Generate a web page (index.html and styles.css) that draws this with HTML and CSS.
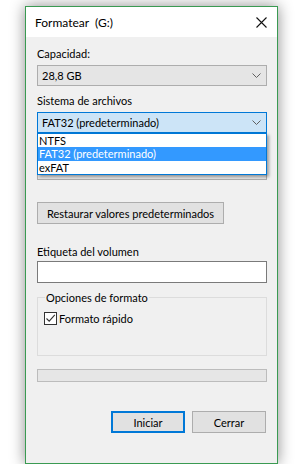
FILE: index.html
```html
<!DOCTYPE html>
<html lang="es">
<head>
    <meta charset="UTF-8">
    <meta name="viewport" content="width=device-width, initial-scale=1.0">
    <title>Formatear (G:)</title>
    <link rel="stylesheet" href="styles.css">
</head>
<body>
    <div class="window">
        <div class="titlebar">
            <span class="title">Formatear&nbsp; (G:)</span>
            <svg class="close" width="11" height="11" viewBox="0 0 11 11">
                <path d="M0.5 0.5 L10.5 10.5 M10.5 0.5 L0.5 10.5" stroke="#111" stroke-width="1.1" fill="none"/>
            </svg>
        </div>
        <div class="client">
            <div class="label first">Capacidad:</div>
            <div class="combo">
                <span>28,8 GB</span>
                <svg class="chevron" width="9" height="5" viewBox="0 0 9 5"><path d="M0.5 0.5 L4.5 4.5 L8.5 0.5" stroke="#606060" fill="none"/></svg>
            </div>

            <div class="label">Sistema de archivos</div>
            <div class="combo-wrap">
                <div class="combo focused">
                    <span>FAT32 (predeterminado)</span>
                    <svg class="chevron" width="9" height="5" viewBox="0 0 9 5"><path d="M0.5 0.5 L4.5 4.5 L8.5 0.5" stroke="#606060" fill="none"/></svg>
                </div>
                <ul class="dropdown">
                    <li>NTFS</li>
                    <li class="selected">FAT32 (predeterminado)</li>
                    <li>exFAT</li>
                </ul>
            </div>

            <!-- covered by the open list -->
            <div class="label covered">Tamaño de unidad de asignación</div>
            <div class="combo">
                <span class="covered">32 kilobytes</span>
            </div>

            <button class="btn restore">Restaurar valores predeterminados</button>

            <div class="label volume">Etiqueta del volumen</div>
            <div class="textbox"></div>

            <div class="group">
                <div class="group-title"><span>Opciones de formato</span></div>
                <label class="check">
                    <span class="box">
                        <svg width="11" height="11" viewBox="0 0 11 11"><path d="M1.5 5.5 L4.2 8.2 L9.8 1.8" stroke="#333" stroke-width="1.1" fill="none"/></svg>
                    </span>
                    Formato rápido
                </label>
            </div>

            <div class="progress"></div>

            <div class="actions">
                <button class="btn default">Iniciar</button>
                <button class="btn">Cerrar</button>
            </div>
        </div>
    </div>
</body>
</html>
```

FILE: styles.css
```css
body {
    margin: 0;
    background: #fff;
    font-family: Lato, "Noto Sans", sans-serif;
    font-size: 11px;
    color: #000;
}
.window {
    margin: 6px 0 0 25px;
    width: 251px;
    height: 456px;
    border: 1px solid #3a9a52;
    background: #f0f0f0;
    box-shadow: 0 0 14px rgba(0, 0, 0, 0.45);
    display: flex;
    flex-direction: column;
}
.titlebar {
    height: 30px;
    background: #fff;
    display: flex;
    align-items: center;
    justify-content: space-between;
    padding: 0 10px 0 9px;
}
.title {
    font-size: 12px;
}
.close {
    display: block;
}
.client {
    padding: 0 10px 0 11px;
}
.label {
    line-height: 15px;
    margin-top: 7px;
}
.label.first {
    margin-top: 9px;
}
.covered {
    visibility: hidden;
}
.combo {
    position: relative;
    margin-top: 4px;
    height: 19px;
    border: 1px solid #adadad;
    background: #e5e5e5;
    display: flex;
    align-items: center;
    justify-content: space-between;
    padding: 0 5px 0 4px;
}
.combo.focused {
    background: #cce4f7;
    border-color: #0078d7;
}
.chevron {
    display: block;
}
.combo-wrap {
    position: relative;
}
.dropdown {
    position: absolute;
    top: 21px;
    left: 0;
    right: 0;
    margin: 0;
    padding: 0;
    list-style: none;
    background: #fff;
    border: 1px solid #0078d7;
    box-shadow: 2px 2px 3px rgba(0, 0, 0, 0.35);
    z-index: 5;
}
.dropdown li {
    height: 13px;
    line-height: 13px;
    padding-left: 1px;
}
.dropdown li.selected {
    height: 14px;
    line-height: 14px;
    background: #3399ff;
    color: #fff;
}
.btn {
    font-family: inherit;
    font-size: 11px;
    color: #000;
    background: #e1e1e1;
    border: 1px solid #adadad;
    height: 22px;
    padding: 0;
}
.restore {
    display: block;
    margin-top: 22px;
    width: 187px;
}
.label.volume {
    margin-top: 20px;
}
.textbox {
    margin-top: 2px;
    height: 20px;
    border: 1px solid #7a7a7a;
    background: #fff;
}
.group {
    margin-top: 14px;
    height: 57px;
    padding: 0 0 0 6px;
    border: 1px solid #dcdcdc;
}
.group-title {
    height: 7px;
    line-height: 15px;
}
.group-title span {
    display: inline-block;
    position: relative;
    top: -8px;
    margin-left: 1px;
    padding: 0 1px;
    background: #f0f0f0;
}
.check {
    display: flex;
    align-items: center;
    gap: 2px;
    margin-top: 7px;
}
.box {
    width: 11px;
    height: 11px;
    border: 1px solid #333;
    background: #fff;
    display: flex;
}
.progress {
    margin-top: 13px;
    height: 11px;
    border: 1px solid #bcbcbc;
    background: #e6e6e6;
}
.actions {
    display: flex;
    justify-content: flex-end;
    gap: 7px;
    margin-top: 29px;
    padding-right: 1px;
}
.actions .btn {
    width: 74px;
}
.btn.default {
    border: 2px solid #0078d7;
}
```
